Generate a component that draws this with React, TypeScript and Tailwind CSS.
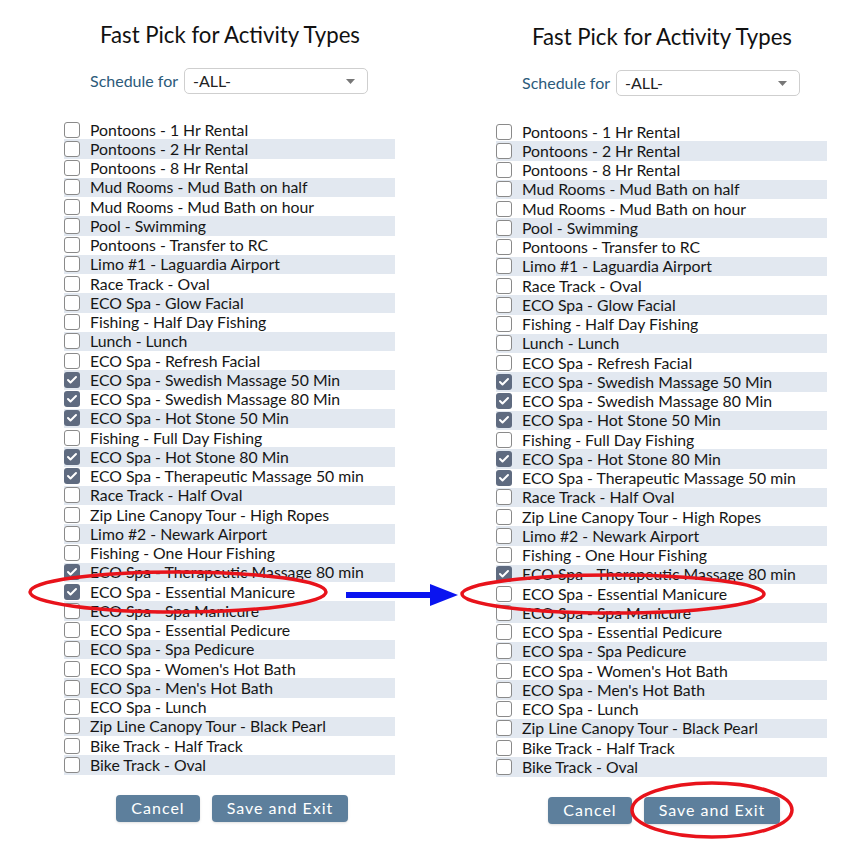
import { Check } from "lucide-react";

const items: [string, boolean][] = [
	["Pontoons - 1 Hr Rental", false],
	["Pontoons - 2 Hr Rental", false],
	["Pontoons - 8 Hr Rental", false],
	["Mud Rooms - Mud Bath on half", false],
	["Mud Rooms - Mud Bath on hour", false],
	["Pool - Swimming", false],
	["Pontoons - Transfer to RC", false],
	["Limo #1 - Laguardia Airport", false],
	["Race Track - Oval", false],
	["ECO Spa - Glow Facial", false],
	["Fishing - Half Day Fishing", false],
	["Lunch - Lunch", false],
	["ECO Spa - Refresh Facial", false],
	["ECO Spa - Swedish Massage 50 Min", true],
	["ECO Spa - Swedish Massage 80 Min", true],
	["ECO Spa - Hot Stone 50 Min", true],
	["Fishing - Full Day Fishing", false],
	["ECO Spa - Hot Stone 80 Min", true],
	["ECO Spa - Therapeutic Massage 50 min", true],
	["Race Track - Half Oval", false],
	["Zip Line Canopy Tour - High Ropes", false],
	["Limo #2 - Newark Airport", false],
	["Fishing - One Hour Fishing", false],
	["ECO Spa - Therapeutic Massage 80 min", true],
	["ECO Spa - Essential Manicure", true],
	["ECO Spa - Spa Manicure", false],
	["ECO Spa - Essential Pedicure", false],
	["ECO Spa - Spa Pedicure", false],
	["ECO Spa - Women's Hot Bath", false],
	["ECO Spa - Men's Hot Bath", false],
	["ECO Spa - Lunch", false],
	["Zip Line Canopy Tour - Black Pearl", false],
	["Bike Track - Half Track", false],
	["Bike Track - Oval", false],
];

function Box({ checked }: { checked: boolean }) {
	if (checked) {
		return (
			<span className="flex h-[16px] w-[16px] shrink-0 items-center justify-center rounded-[3px] bg-[#5f6b80]">
				<Check className="h-[12px] w-[12px] text-white" strokeWidth={4} />
			</span>
		);
	}
	return <span className="h-[16px] w-[16px] shrink-0 rounded-[3px] border border-[#8a8a8a] bg-white" />;
}

function Panel({ manicure, shifted }: { manicure: boolean; shifted?: boolean }) {
	return (
		<div className={shifted ? "w-[340px] pt-[23px]" : "w-[340px] pt-[21px]"}>
			<h1 className="text-center text-[22.2px] leading-[28px] text-[#111]">Fast Pick for Activity Types</h1>
			<div className="mt-[19px] flex items-center pl-[30px]">
				<span className="w-[94px] text-[16px] text-[#2c5a7a]">Schedule for</span>
				<div className="flex h-[26px] w-[184px] items-center justify-between rounded-[5px] border border-[#cfcfcf] pl-[8px] pr-[12px] text-[16px] text-[#222]">
					<span>-ALL-</span>
					<svg width="9" height="5" viewBox="0 0 9 5">
						<path d="M0 0h9L4.5 5z" fill="#777" />
					</svg>
				</div>
			</div>
			<ul className="mt-[26px] pl-[4px] pr-[5px]">
				{items.map(([label, checked], i) => {
					const on = label === "ECO Spa - Essential Manicure" ? manicure : checked;
					return (
						<li
							key={label}
							className={
								i % 2 === 1
									? "flex h-[19.25px] items-center gap-[10px] bg-[#e2e8f0] text-[15.8px] text-[#161616]"
									: "flex h-[19.25px] items-center gap-[10px] text-[15.8px] text-[#161616]"
							}
						>
							<Box checked={on} />
							<span className="whitespace-nowrap leading-none">{label}</span>
						</li>
					);
				})}
			</ul>
			<div className="mt-[20px] flex justify-center gap-[12px] pl-[4px]">
				<button className="h-[27px] w-[84px] rounded-[4px] bg-[#5d7f9c] text-[16px] tracking-[1px] text-white shadow-sm">
					Cancel
				</button>
				<button className="h-[27px] w-[136px] rounded-[4px] bg-[#5d7f9c] text-[16px] tracking-[1px] text-white shadow-sm">
					Save and Exit
				</button>
			</div>
		</div>
	);
}

export default function App() {
	return (
		<div className="relative h-[864px] w-[860px] bg-white font-['Lato',sans-serif]">
			<div className="flex gap-[92px] pl-[60px]">
				<Panel manicure={true} />
				<Panel manicure={false} shifted />
			</div>
			<svg className="pointer-events-none absolute left-0 top-0" width="860" height="864">
				<ellipse cx="178" cy="592" rx="148" ry="20" fill="none" stroke="#e8131b" strokeWidth="3.5" />
				<ellipse cx="613" cy="594" rx="151" ry="19" fill="none" stroke="#e8131b" strokeWidth="3.5" />
				<ellipse cx="712" cy="810" rx="80" ry="27" fill="none" stroke="#e8131b" strokeWidth="3.5" />
				<rect x="346" y="592" width="88" height="6" fill="#0a14f0" />
				<path d="M430 584L458 595L430 606z" fill="#0a14f0" />
			</svg>
		</div>
	);
}
